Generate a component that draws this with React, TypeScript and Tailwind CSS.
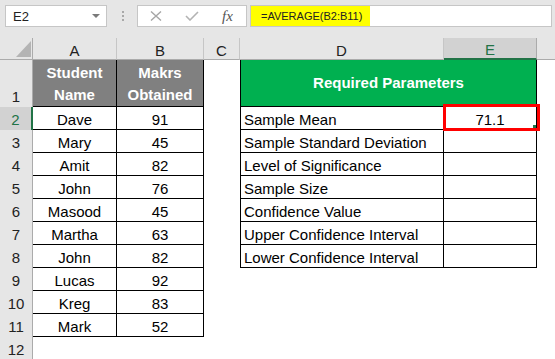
import React from "react";

const students: [string, string][] = [
  ["Dave", "91"],
  ["Mary", "45"],
  ["Amit", "82"],
  ["John", "76"],
  ["Masood", "45"],
  ["Martha", "63"],
  ["John", "82"],
  ["Lucas", "92"],
  ["Kreg", "83"],
  ["Mark", "52"],
];

const params = [
  "Sample Mean",
  "Sample Standard Deviation",
  "Level of Significance",
  "Sample Size",
  "Confidence Value",
  "Upper Confidence Interval",
  "Lower Confidence Interval",
];

const colHead =
  "flex items-end justify-center bg-[#e6e6e6] border-r border-r-[#c6c6c6] border-b border-b-[#ababab] text-[#222]";

const Toolbar = () => (
  <div className="flex h-[38px] items-start bg-[#e6e6e6] pt-[5px]">
    {/* Name box */}
    <div className="ml-[5px] flex h-[22px] w-[102px] items-center justify-between border border-[#c6c6c6] bg-white pl-[7px] pr-[6px]">
      <span className="text-[13px] leading-none text-[#222]">E2</span>
      <svg width="8" height="4" viewBox="0 0 8 4">
        <polygon points="0,0 8,0 4,4" fill="#7a7a7a" />
      </svg>
    </div>
    {/* dots */}
    <div className="flex h-[22px] w-[30px] flex-col items-center justify-center gap-[2px] pl-[2px]">
      <div className="h-[2px] w-[2px] bg-[#a8a8a8]" />
      <div className="h-[2px] w-[2px] bg-[#a8a8a8]" />
      <div className="h-[2px] w-[2px] bg-[#a8a8a8]" />
    </div>
    {/* cancel / enter / fx */}
    <div className="flex h-[22px] w-[110px] items-center border border-[#c6c6c6] bg-white">
      <svg className="ml-[12px]" width="12" height="10" viewBox="0 0 12 10">
        <path d="M1 0.5 L11 9.5 M11 0.5 L1 9.5" stroke="#a6a6a6" strokeWidth="1.4" fill="none" />
      </svg>
      <svg className="ml-[23px]" width="14" height="10" viewBox="0 0 14 10">
        <path d="M1 5 L5 9 L13 1" stroke="#b3b3b3" strokeWidth="1.6" fill="none" />
      </svg>
      <span className="ml-[23px] font-['Liberation_Serif',serif] text-[15px] italic leading-none text-[#555]">
        fx
      </span>
    </div>
    {/* formula bar */}
    <div className="ml-[3px] mr-[3px] flex h-[22px] flex-1 items-stretch border border-[#c6c6c6] bg-white">
      <div className="flex w-[119px] items-center bg-[#ffff00] pl-[10px]">
        <span className="text-[11px] leading-none text-[#222]">=AVERAGE(B2:B11)</span>
      </div>
    </div>
  </div>
);

export default function App() {
  const rows = Array.from({ length: 11 }, (_, i) => i);

  return (
    <div className="h-[359px] w-[555px] overflow-hidden bg-white font-['Liberation_Sans',Arial,sans-serif] text-[15px] leading-[17px] text-black">
      <Toolbar />

      <div className="grid grid-cols-[33px_84px_87px_36px_204px_93px_1fr] grid-rows-[22px_47px_repeat(11,23px)]">
        {/* column headers */}
        <div className="flex items-end justify-end border-r border-b border-[#ababab] bg-[#e6e6e6] pb-[2px] pr-px">
          <svg width="15" height="16" viewBox="0 0 15 16">
            <polygon points="15,0 15,16 0,16" fill="#b4b4b4" />
          </svg>
        </div>
        <div className={colHead}>A</div>
        <div className={colHead}>B</div>
        <div className={colHead}>C</div>
        <div className={colHead + " border-r-[#ababab]"}>D</div>
        <div className="flex items-end justify-center border-r border-r-[#ababab] border-b-2 border-b-[#217346] bg-[#d2d2d2] text-[#217346]">
          E
        </div>
        <div className="border-b border-b-[#ababab] bg-[#e6e6e6]" />

        {/* row 1 */}
        <div className="flex items-end justify-center border-r border-[#ababab] bg-[#e6e6e6] pb-[2px] text-[#222]">
          1
        </div>
        <div className="flex items-end justify-center border-r border-b border-black bg-[#808080] text-center font-bold leading-[22px] text-white">
          Student
          <br />
          Name
        </div>
        <div className="flex items-end justify-center border-r border-b border-black bg-[#808080] text-center font-bold leading-[22px] text-white">
          Makrs
          <br />
          Obtained
        </div>
        <div />
        <div className="col-span-2 flex items-center justify-center border-l border-r border-b border-black bg-[#00b050] pb-px font-bold text-white">
          Required Parameters
        </div>
        <div />

        {/* rows 2 - 12 */}
        {rows.map((i) => {
          const s = students[i];
          const p = params[i];
          const active = i === 0;
          return (
            <React.Fragment key={i}>
              <div
                className={
                  active
                    ? "flex items-end justify-center border-r-2 border-[#217346] bg-[#d2d2d2] pb-[2px] text-[#217346]"
                    : "flex items-end justify-center border-r border-[#ababab] bg-[#e6e6e6] pb-[2px] text-[#222]"
                }
              >
                {i + 2}
              </div>
              {s ? (
                <>
                  <div className="flex items-end justify-center border-r border-b border-black pb-px">
                    {s[0]}
                  </div>
                  <div className="flex items-end justify-center border-r border-b border-black pb-px">
                    {s[1]}
                  </div>
                </>
              ) : (
                <>
                  <div />
                  <div />
                </>
              )}
              <div />
              {p ? (
                <>
                  <div className="flex items-end whitespace-nowrap border-l border-r border-b border-black pb-px pl-[3px]">
                    {p}
                  </div>
                  <div className="relative flex items-end justify-center border-r border-b border-black pb-px">
                    {active && (
                      <>
                        71.1
                        <div className="pointer-events-none absolute -left-px -top-[3px] -right-[4px] -bottom-[2px] z-10 border-[3px] border-[#ff0000]" />
                        <div className="absolute right-0 bottom-px z-20 h-[3px] w-[3px] bg-[#217346]" />
                      </>
                    )}
                  </div>
                </>
              ) : (
                <>
                  <div />
                  <div />
                </>
              )}
              <div />
            </React.Fragment>
          );
        })}
      </div>
    </div>
  );
}
